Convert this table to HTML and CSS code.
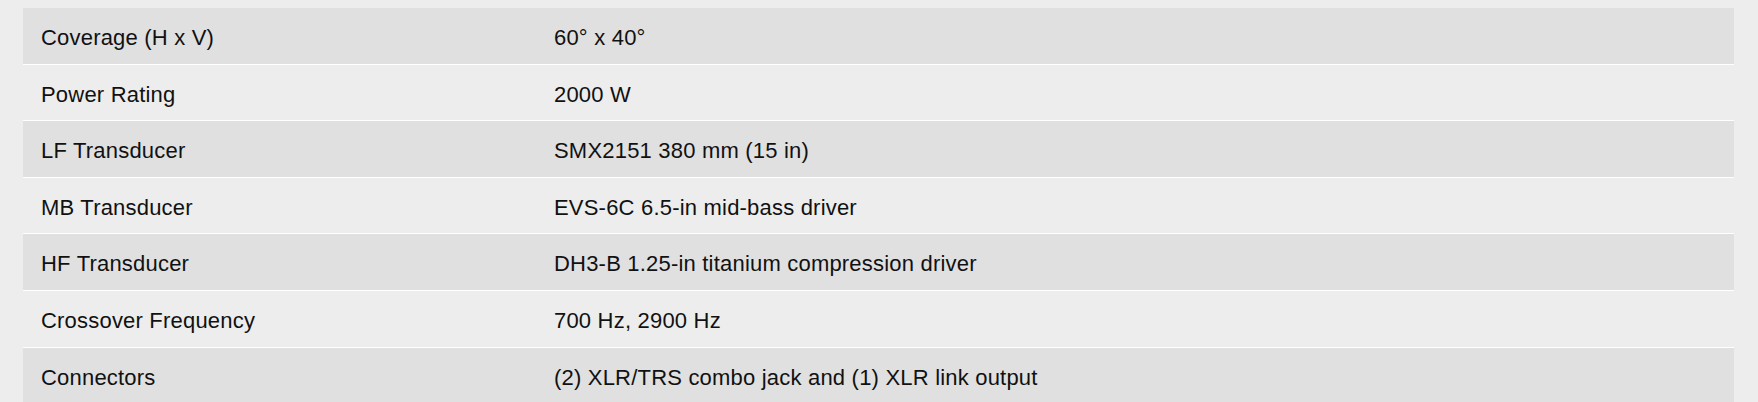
FILE: index.html
```html
<!DOCTYPE html>
<html lang="en">
<head>
<meta charset="utf-8">
<title>Specifications</title>
<link rel="stylesheet" href="styles.css">
</head>
<body>
<div class="page">
  <table class="spec-table">
    <tbody>
      <tr class="row"><td class="label">Coverage (H x V)</td><td class="value">60° x 40°</td></tr>
      <tr class="row"><td class="label">Power Rating</td><td class="value">2000 W</td></tr>
      <tr class="row"><td class="label">LF Transducer</td><td class="value">SMX2151 380 mm (15 in)</td></tr>
      <tr class="row"><td class="label">MB Transducer</td><td class="value">EVS-6C 6.5-in mid-bass driver</td></tr>
      <tr class="row"><td class="label">HF Transducer</td><td class="value">DH3-B 1.25-in titanium compression driver</td></tr>
      <tr class="row"><td class="label">Crossover Frequency</td><td class="value">700 Hz, 2900 Hz</td></tr>
      <tr class="row"><td class="label">Connectors</td><td class="value">(2) XLR/TRS combo jack and (1) XLR link output</td></tr>
    </tbody>
  </table>
</div>
</body>
</html>
```

FILE: styles.css
```css
html, body {
  margin: 0;
  padding: 0;
  background: #ededed;
}
body {
  font-family: "Liberation Sans", Arial, sans-serif;
  color: #111;
}
.page {
  padding: 8px 24px 0 23px;
}
.spec-table {
  width: 100%;
  border-collapse: collapse;
  table-layout: fixed;
}
.row td {
  font-size: 22px;
  letter-spacing: 0.2px;
  line-height: 25px;
  padding: 17px 18px 13.6px 18px;
  border-bottom: 1px solid #ffffff;
  vertical-align: middle;
}
.row:nth-child(odd) td {
  background: #e0e0e0;
}
.row:nth-child(even) td {
  background: #ededed;
}
.label {
  width: 477px;
}
```
